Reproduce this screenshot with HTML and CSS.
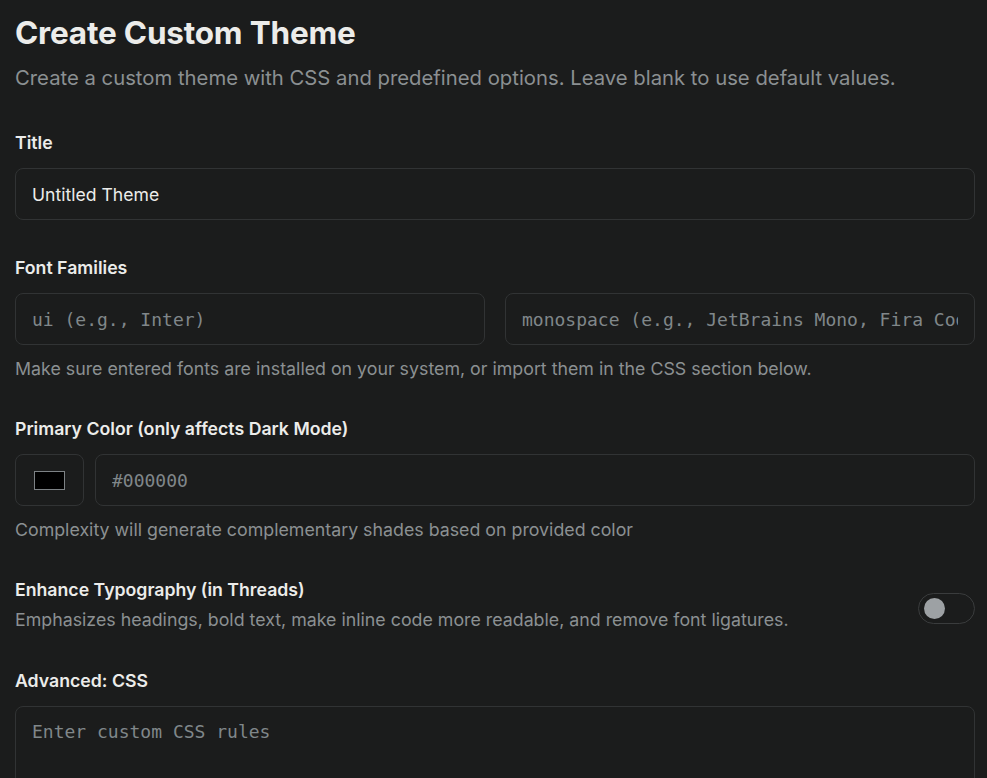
FILE: index.html
```html
<!DOCTYPE html>
<html>
<head>
<meta charset="utf-8">
<link rel="stylesheet" href="styles.css">
</head>
<body>
<div class="page">
  <h1 class="title">Create Custom Theme</h1>
  <p class="subtitle">Create a custom theme with CSS and predefined options. Leave blank to use default values.</p>

  <section class="field first">
    <label class="label">Title</label>
    <input class="input" type="text" value="Untitled Theme">
  </section>

  <section class="field">
    <label class="label">Font Families</label>
    <div class="row2">
      <input class="input mono" type="text" placeholder="ui (e.g., Inter)">
      <input class="input mono" type="text" placeholder="monospace (e.g., JetBrains Mono, Fira Code)">
    </div>
    <p class="help">Make sure entered fonts are installed on your system, or import them in the CSS section below.</p>
  </section>

  <section class="field">
    <label class="label">Primary Color (only affects Dark Mode)</label>
    <div class="colorrow">
      <div class="swatchbox"><span class="swatch"></span></div>
      <input class="input mono grow" type="text" placeholder="#000000">
    </div>
    <p class="help">Complexity will generate complementary shades based on provided color</p>
  </section>

  <section class="field toggle-field">
    <div class="toggle-text">
      <div class="label">Enhance Typography (in Threads)</div>
      <p class="help tight">Emphasizes headings, bold text, make inline code more readable, and remove font ligatures.</p>
    </div>
    <div class="toggle"><span class="knob"></span></div>
  </section>

  <section class="field last">
    <label class="label">Advanced: CSS</label>
    <textarea class="input mono area" placeholder="Enter custom CSS rules"></textarea>
  </section>
</div>
</body>
</html>
```
FILE: styles.css
```css
html, body {
  margin: 0;
  padding: 0;
  background: #1b1c1c;
  height: 778px;
  overflow: hidden;
}
body {
  font-family: Inter, "Noto Sans", sans-serif;
  color: #ececea;
}
.page {
  padding: 13px 12px 0 15px;
  display: flex;
  flex-direction: column;
}
.title {
  margin: 0;
  font-size: 31.5px;
  font-weight: 700;
  line-height: 40px;
  letter-spacing: -0.2px;
}
.subtitle {
  margin: 11px 0 0 0;
  font-size: 20.3px;
  line-height: 28px;
  color: #8b9092;
}
.field {
  display: flex;
  flex-direction: column;
  margin-top: 36px;
}
.field.first {
  margin-top: 39px;
}
.field.last {
  margin-top: 37px;
}
.label {
  font-size: 17.7px;
  font-weight: 600;
  line-height: 24px;
  color: #ececea;
  margin-bottom: 13px;
}
.input {
  box-sizing: border-box;
  height: 52px;
  width: 100%;
  background: #1b1c1c;
  border: 1px solid #313334;
  border-radius: 8px;
  padding: 0 16px;
  font-family: Inter, "Noto Sans", sans-serif;
  font-size: 17.6px;
  color: #ececea;
  outline: none;
}
.input.mono {
  font-family: "DejaVu Sans Mono", monospace;
  font-size: 18px;
}
.input::placeholder {
  color: #80878a;
}
.row2 {
  display: grid;
  grid-template-columns: 1fr 1fr;
  gap: 20px;
}
.help {
  margin: 12px 0 0 0;
  font-size: 17.8px;
  line-height: 24px;
  color: #8b9092;
}
.help.tight {
  margin-top: 6px;
}
.colorrow {
  display: flex;
  gap: 11px;
}
.swatchbox {
  box-sizing: border-box;
  flex: 0 0 69px;
  height: 52px;
  border: 1px solid #313334;
  border-radius: 8px;
  display: flex;
  align-items: center;
  justify-content: center;
}
.swatch {
  box-sizing: border-box;
  width: 31px;
  height: 19px;
  background: #000;
  border: 1px solid #7d8285;
}
.grow {
  flex: 1;
}
.toggle-field {
  flex-direction: row;
  align-items: center;
  justify-content: space-between;
}
.toggle-text .label {
  margin-bottom: 0;
}
.toggle {
  box-sizing: border-box;
  width: 57px;
  height: 31px;
  border: 1px solid #3a3c3d;
  border-radius: 16px;
  display: flex;
  align-items: center;
  padding-left: 5px;
  margin-top: 7px;
}
.knob {
  width: 21px;
  height: 21px;
  border-radius: 50%;
  background: #9da1a4;
}
.area {
  height: 80px;
  padding: 14px 16px;
  resize: none;
}
```
